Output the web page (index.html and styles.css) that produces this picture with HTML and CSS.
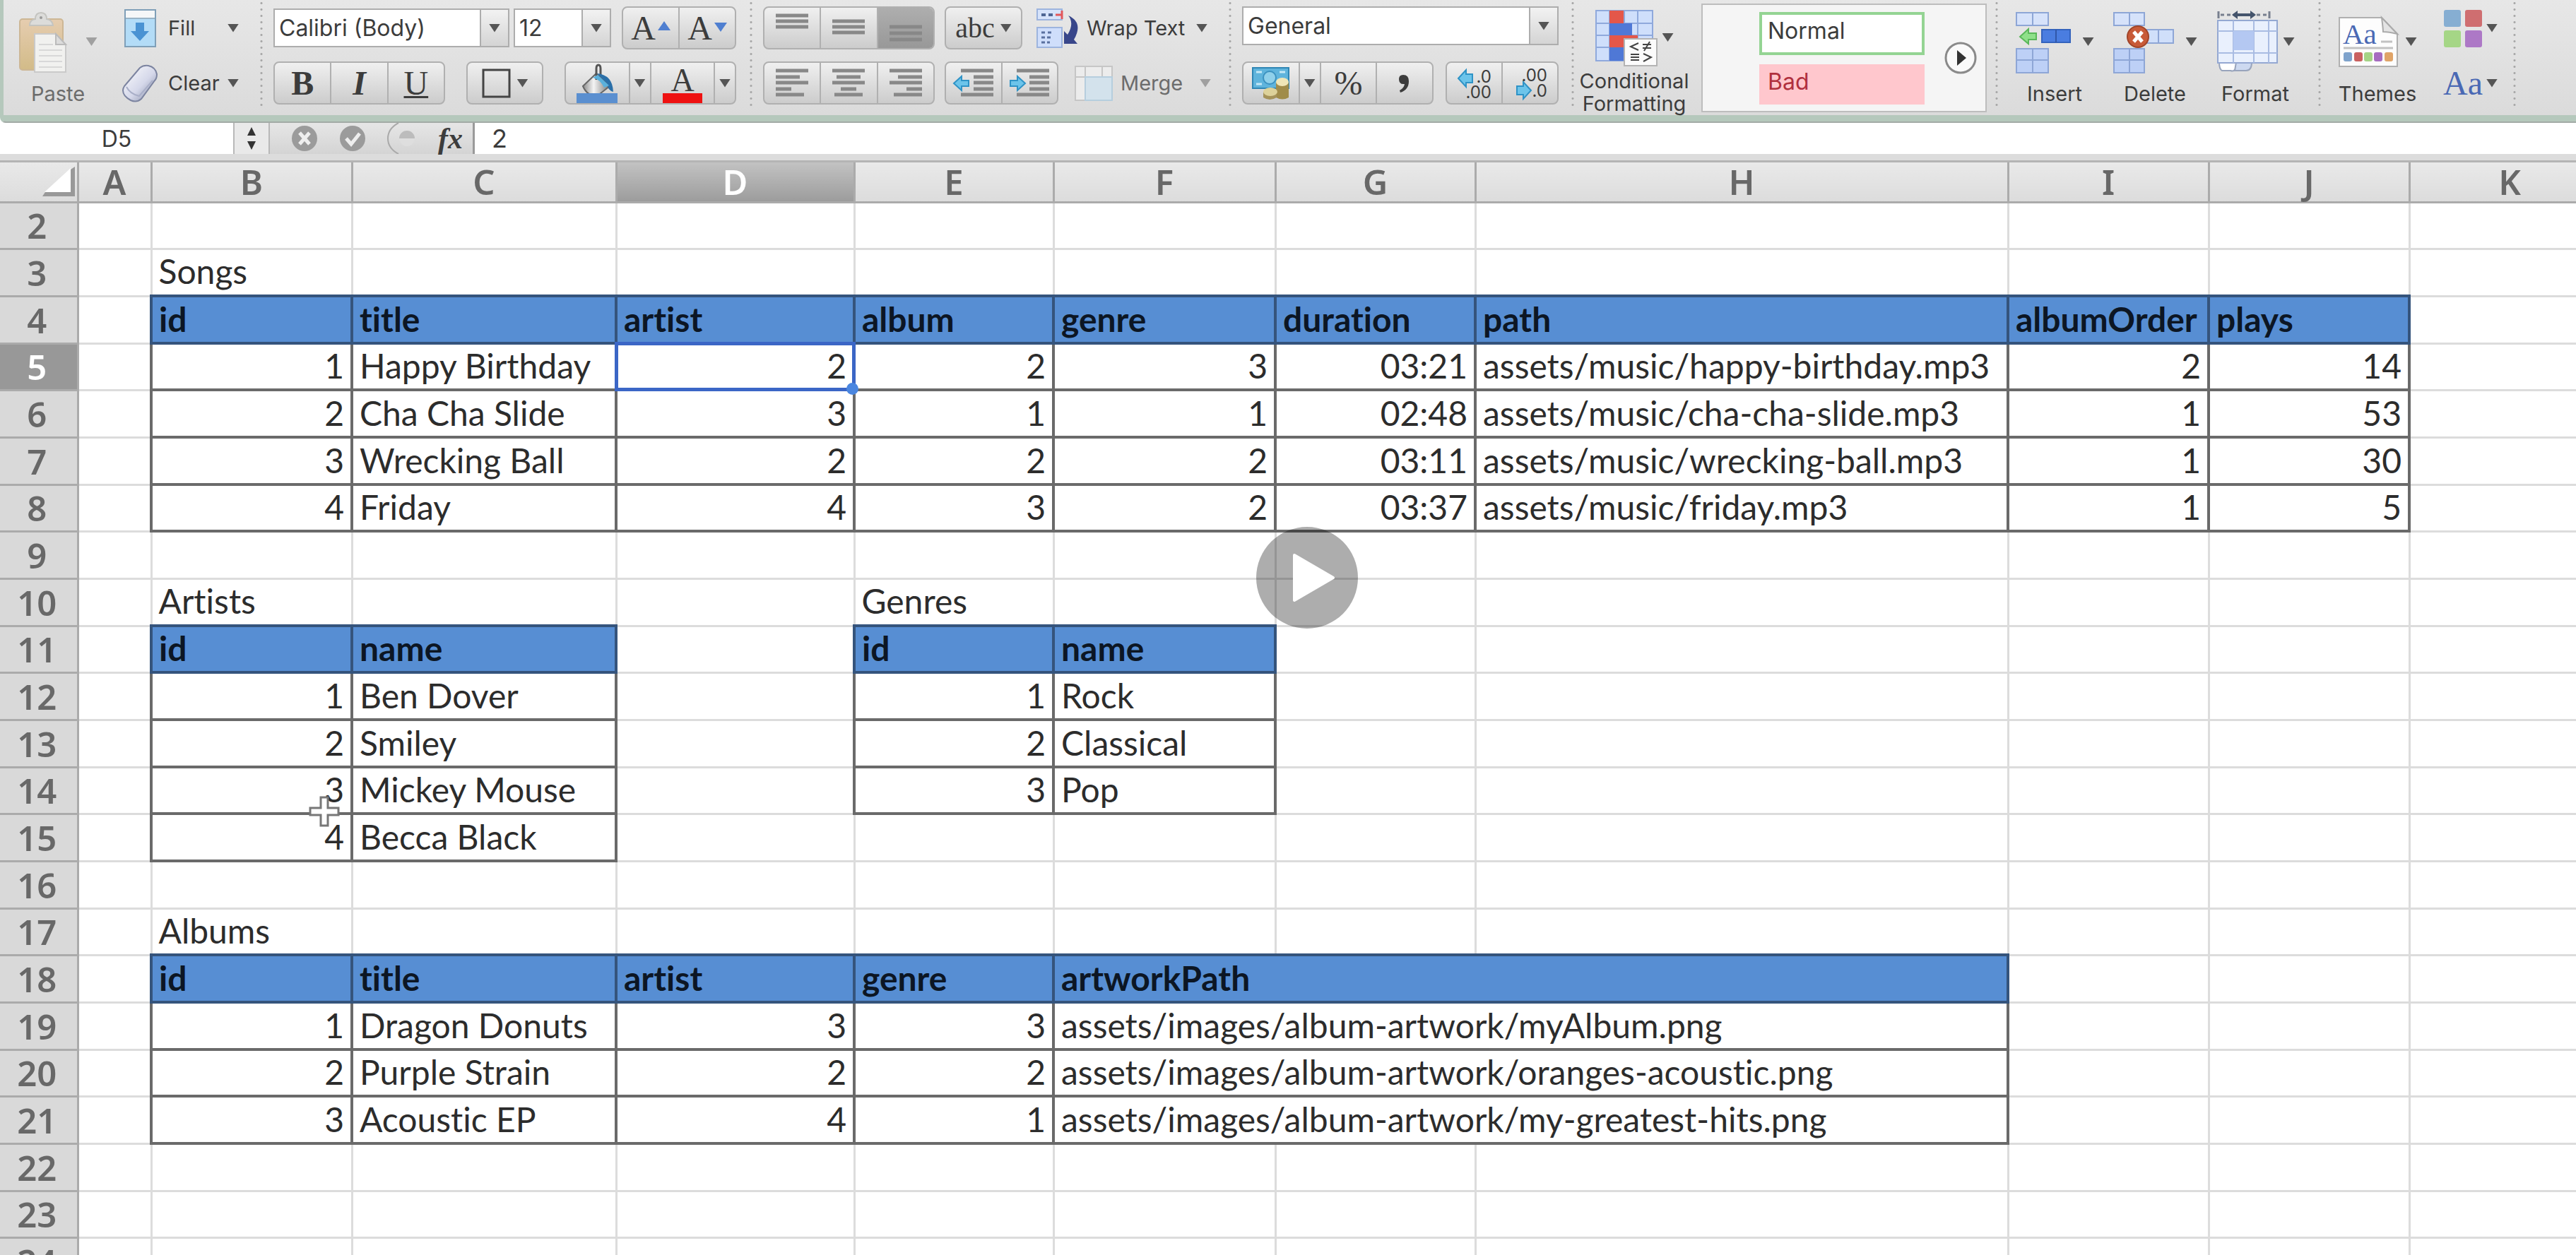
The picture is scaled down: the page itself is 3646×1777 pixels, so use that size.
FILE: index.html
```html
<!DOCTYPE html>
<html lang="en">
<head>
<meta charset="utf-8">
<title>Music database workbook</title>
<link rel="stylesheet" href="styles.css">
</head>
<body>
<header class="ribbon">
  <div class="group group-edit">
    <button class="big muted" type="button">
      <span class="big-icon">
        <svg width="88" height="90" viewBox="0 0 88 90" aria-hidden="true">
          <defs><linearGradient id="board" x1="0" y1="0" x2="0" y2="1"><stop offset="0" stop-color="#e6cdb0"/><stop offset="1" stop-color="#d2bb88"/></linearGradient></defs>
          <rect x="1" y="13" width="61" height="72" rx="4" fill="url(#board)" stroke="#cdb795" stroke-width="2"/>
          <path d="M15 22q0-8 8-9q0-9 8-9t8 9q8 1 9 9z" fill="#dcdcda" stroke="#c4c4c0" stroke-width="2"/>
          <circle cx="31" cy="11" r="2" fill="#999"/>
          <path d="M22 34h30l14 15v39H22z" fill="#f1f1ef" stroke="#cacaca" stroke-width="2"/>
          <path d="M52 34v15h14z" fill="#dcdcdc" stroke="#bbb" stroke-width="2"/>
          <path d="M28 49h20M28 57h33M28 65h33M28 73h33M28 81h33" stroke="#d8d8d8" stroke-width="2"/>
        </svg>
        <span class="caret"></span>
      </span>
      <span class="big-label">Paste</span>
    </button>
    <div class="rows">
      <button class="tool tool-edit" type="button">
        <svg width="52" height="56" viewBox="0 0 52 56" aria-hidden="true">
          <rect x="5" y="2" width="43" height="52" fill="#b3dcf7" stroke="#7f9fb8" stroke-width="2"/>
          <rect x="6" y="3" width="41" height="11" fill="#f5f7f8"/>
          <path d="M6 14h41" stroke="#9ab4c6" stroke-width="2"/>
          <path d="M20 20h12v12h7L26 46 13 32h7z" fill="#4a93d3"/>
        </svg>
        <span>Fill</span><span class="caret"></span>
      </button>
      <button class="tool tool-edit" type="button">
        <svg width="52" height="56" viewBox="0 0 52 56" aria-hidden="true">
          <defs><linearGradient id="rub" x1="0" y1="0" x2="1" y2="1"><stop offset="0" stop-color="#fff"/><stop offset=".55" stop-color="#d5d8ea"/><stop offset="1" stop-color="#7a829e"/></linearGradient></defs>
          <path d="M4 32 26 6q5-4 12-3 10 2 12 12 0 6-3 9L28 50q-7 6-15 2Q2 46 2 38q0-3 2-6z" fill="url(#rub)" stroke="#7c84a0" stroke-width="2"/>
          <path d="M7 33q5 10 18 13L44 24" fill="none" stroke="#a9afc8" stroke-width="2"/>
        </svg>
        <span>Clear</span><span class="caret"></span>
      </button>
    </div>
  </div>
  <div class="separator"></div>
  <div class="group group-font">
    <div class="rows">
      <div class="row">
        <div class="combo combo-font"><select aria-label="Font"><option>Calibri (Body)</option></select><span class="combo-arrow"><span class="caret"></span></span></div>
        <div class="combo combo-size"><select aria-label="Font size"><option>12</option></select><span class="combo-arrow"><span class="caret"></span></span></div>
        <div class="seg seg-grow">
          <button type="button" aria-label="Increase font size"><span class="serif">A</span><svg width="18" height="60" viewBox="0 0 18 60" aria-hidden="true"><path d="M0 33 9 20l9 13z" fill="#4f7fd0"/></svg></button>
          <button type="button" aria-label="Decrease font size"><span class="serif">A</span><svg width="18" height="60" viewBox="0 0 18 60" aria-hidden="true"><path d="M0 22h18L9 35z" fill="#4f7fd0"/></svg></button>
        </div>
      </div>
      <div class="row">
        <div class="seg seg-triple">
          <button type="button" class="serif bold">B</button>
          <button type="button" class="serif bold italic">I</button>
          <button type="button" class="serif underline">U</button>
        </div>
        <div class="seg seg-border"><button type="button" aria-label="Borders"><svg width="42" height="44" viewBox="0 0 42 44" aria-hidden="true"><rect x="2" y="3" width="37" height="38" fill="none" stroke="#444" stroke-width="3"/></svg><span class="caret"></span></button></div>
        <div class="seg seg-colour">
          <button type="button" aria-label="Fill colour">
            <svg width="60" height="58" viewBox="0 0 60 58" aria-hidden="true">
              <defs><linearGradient id="can" x1="0" y1="0" x2="1" y2="0"><stop offset="0" stop-color="#8a8a8a"/><stop offset=".4" stop-color="#f4f4f4"/><stop offset="1" stop-color="#777"/></linearGradient></defs>
              <path d="M29 15 48 33 30 47q-14 0-20-14z" fill="url(#can)" stroke="#666" stroke-width="2"/>
              <path d="M29 24V8q0-5 3-5t3 5v12" fill="none" stroke="#555" stroke-width="3"/>
              <path d="M30 15q22 2 23 26-8-2-9-12z" fill="#2a6fa8"/>
              <path d="M24 21q10 2 16 14l7-3L31 17z" fill="#5ab0dc"/>
              <rect x="1" y="43" width="58" height="15" fill="#5a8fd0"/>
            </svg>
          </button>
          <button type="button" class="drop" aria-label="Fill colour options"><span class="caret"></span></button>
          <button type="button" aria-label="Font colour"><svg width="56" height="58" viewBox="0 0 56 58" aria-hidden="true"><text x="28" y="40" text-anchor="middle" font-family="Liberation Serif, serif" font-size="46" fill="#3c3c3c">A</text><rect x="0" y="43" width="56" height="14" fill="#ee1111"/></svg></button>
          <button type="button" class="drop" aria-label="Font colour options"><span class="caret"></span></button>
        </div>
      </div>
    </div>
  </div>
  <div class="separator"></div>
  <div class="group group-align">
    <div class="rows">
      <div class="row">
        <div class="seg seg-triple">
          <button type="button" aria-label="Align top"><svg class="lines" width="46" height="44" viewBox="0 0 46 44"><path d="M0 4h46M0 12h46M0 20h46"/></svg></button>
          <button type="button" aria-label="Align middle"><svg class="lines" width="46" height="44" viewBox="0 0 46 44"><path d="M0 12h46M0 20h46M0 28h46"/></svg></button>
          <button type="button" class="pressed" aria-label="Align bottom"><svg class="lines" width="46" height="44" viewBox="0 0 46 44"><path d="M0 20h46M0 29h46M0 38h46"/></svg></button>
        </div>
        <div class="seg seg-abc"><button type="button" aria-label="Orientation"><span class="serif abc">abc</span><span class="caret"></span></button></div>
        <button class="tool tool-wrap" type="button">
          <svg width="60" height="58" viewBox="0 0 60 58" aria-hidden="true">
            <rect x="2" y="2" width="35" height="15" fill="#d6e3fb" stroke="#9db4de" stroke-width="2"/>
            <path d="M8 10h6m4 0h6" stroke="#4f6694" stroke-width="4"/><path d="M28 10h9m0-6v12" stroke="#e2575b" stroke-width="3"/>
            <rect x="2" y="28" width="35" height="28" fill="#cfdefb" stroke="#9db4de" stroke-width="2"/>
            <path d="M8 35h5m4 0h5M8 42h16M8 49h12" stroke="#5a70a0" stroke-width="3" stroke-dasharray="5 3"/>
            <path d="M46 11q22 10 8 34l5 6H40V33l5 5q10-16 1-27z" fill="#38468a"/>
          </svg>
          <span>Wrap Text</span><span class="caret"></span>
        </button>
      </div>
      <div class="row">
        <div class="seg seg-triple">
          <button type="button" aria-label="Align left"><svg class="lines" width="46" height="44" viewBox="0 0 46 44"><path d="M0 4h46M0 13h34M0 21h46M0 30h22M0 38h40"/></svg></button>
          <button type="button" aria-label="Align centre"><svg class="lines" width="46" height="44" viewBox="0 0 46 44"><path d="M0 4h46M6 13h34M0 21h46M12 30h22M3 38h40"/></svg></button>
          <button type="button" aria-label="Align right"><svg class="lines" width="46" height="44" viewBox="0 0 46 44"><path d="M0 4h46M12 13h34M0 21h46M24 30h22M6 38h40"/></svg></button>
        </div>
        <div class="seg seg-pair">
          <button type="button" aria-label="Decrease indent"><svg class="lines" width="60" height="44" viewBox="0 0 60 44"><path d="M12 4h46M30 13h28M30 21h28M30 30h28M12 38h46"/><path class="arrow" d="M2 22 13 12v6h10v8H13v6z"/></svg></button>
          <button type="button" aria-label="Increase indent"><svg class="lines" width="60" height="44" viewBox="0 0 60 44"><path d="M12 4h46M30 13h28M30 21h28M30 30h28M12 38h46"/><path class="arrow" d="M24 22 13 12v6H3v8h10v6z"/></svg></button>
        </div>
        <button class="tool tool-merge muted" type="button">
          <svg width="56" height="52" viewBox="0 0 56 52" aria-hidden="true">
            <rect x="2" y="2" width="52" height="48" fill="#ececec" stroke="#c6c6c6" stroke-width="2"/>
            <path d="M16 2v48M2 17h52M40 2v15" stroke="#c6c6c6" stroke-width="2"/>
            <rect x="16" y="17" width="38" height="33" fill="#d3e2ec" stroke="#b6cede" stroke-width="2"/>
          </svg>
          <span>Merge</span><span class="caret"></span>
        </button>
      </div>
    </div>
  </div>
  <div class="separator"></div>
  <div class="group group-number">
    <div class="rows">
      <div class="row">
        <div class="combo combo-number"><select aria-label="Number format"><option>General</option></select><span class="combo-arrow"><span class="caret"></span></span></div>
      </div>
      <div class="row">
        <div class="seg seg-number">
          <button type="button" aria-label="Currency">
            <svg width="56" height="52" viewBox="0 0 56 52" aria-hidden="true">
              <rect x="2" y="4" width="51" height="29" fill="#5fb4dc" stroke="#2f86b4" stroke-width="2"/>
              <path d="M7 10h8M7 27h8M40 10h8" stroke="#c4e8f6" stroke-width="3"/><circle cx="26" cy="18" r="9" fill="#8fd0ea" stroke="#3c92c0" stroke-width="2"/>
              <path d="M35 24v22q9 5 18 0V24z" fill="#a08c4a"/><ellipse cx="44" cy="24" rx="9" ry="6" fill="#efe6b8"/>
              <path d="M17 38v8q9 6 19 0v-8z" fill="#a5935a"/><ellipse cx="27" cy="38" rx="10" ry="6" fill="#ddd29a"/>
            </svg>
          </button>
          <button type="button" class="drop" aria-label="Currency options"><span class="caret"></span></button>
          <button type="button" class="serif">%</button>
          <button type="button" aria-label="Comma style"><svg width="22" height="34" viewBox="0 0 22 34" aria-hidden="true"><path d="M3 11Q3 5 9 5q8 0 8 9 0 12-12 16l-1-3q6-3 7-9-8 1-8-7z" fill="#3c3c3c"/></svg></button>
        </div>
        <div class="seg seg-decimal">
          <button type="button" aria-label="Increase decimal"><svg width="60" height="56" viewBox="0 0 60 56"><path class="arrow" d="M7 21 18 9v6h9v12h-9v6z"/><text x="54" y="27" text-anchor="end" class="digits">.0</text><text x="54" y="49" text-anchor="end" class="digits">.00</text></svg></button>
          <button type="button" aria-label="Decrease decimal"><svg width="60" height="56" viewBox="0 0 60 56"><path class="arrow" d="M31 38 20 26v6h-9v12h9v6z"/><text x="54" y="25" text-anchor="end" class="digits">.00</text><text x="54" y="47" text-anchor="end" class="digits">.0</text></svg></button>
        </div>
      </div>
    </div>
  </div>
  <div class="separator"></div>
  <div class="group group-style">
    <button class="big big-two" type="button">
      <span class="big-icon">
        <svg width="88" height="82" viewBox="0 0 88 82" aria-hidden="true">
          <rect x="1" y="3" width="80" height="71" fill="#cfdffb" stroke="#8fa9dc" stroke-width="2"/>
          <path d="M1 21h80M1 38h80M1 55h80M20 3v71M41 3v71M60 3v71" stroke="#8fa9dc" stroke-width="2"/>
          <rect x="20" y="3" width="20" height="18" fill="#e4574a"/><rect x="20" y="21" width="32" height="17" fill="#4f78d6"/>
          <rect x="20" y="38" width="40" height="17" fill="#e4574a"/><rect x="20" y="55" width="24" height="19" fill="#4f78d6"/>
          <rect x="41" y="43" width="46" height="38" fill="#fbfbfb" stroke="#b4b4b4" stroke-width="2"/>
          <path d="M61 49 50 54l11 5M67 51h12M67 56h12M77 47l-8 13M50 65h12M50 69h12M50 73h12M68 64l11 5-11 6" fill="none" stroke="#444" stroke-width="2"/>
        </svg>
        <span class="caret"></span>
      </span>
      <span class="big-label">Conditional<br>Formatting</span>
    </button>
    <div class="gallery">
      <div class="styles">
        <button type="button" class="style-normal">Normal</button>
        <button type="button" class="style-bad">Bad</button>
      </div>
      <button type="button" class="more" aria-label="More styles"><svg width="46" height="48" viewBox="0 0 46 48"><circle cx="23" cy="24" r="21" fill="#fafafa" stroke="#8a8a8a" stroke-width="3"/><path d="M18 13v22l13-11z" fill="#333"/></svg></button>
    </div>
  </div>
  <div class="separator"></div>
  <div class="group group-cells">
    <button class="big" type="button">
      <span class="big-icon">
        <svg width="88" height="90" viewBox="0 0 88 90" aria-hidden="true">
          <g stroke="#8ea6d6" stroke-width="2"><path d="M1 4h45v18H1z" fill="#d6e2fa"/><path d="M24 4v18"/><path d="M1 55h45v34H1z" fill="#bdd0f6"/><path d="M24 55v34M1 71h45"/></g>
          <rect x="37" y="28" width="40" height="18" fill="#4a7de0" stroke="#3463bd" stroke-width="2"/><path d="M57 28v18" stroke="#3157a8" stroke-width="2"/>
          <path d="M6 38 18 27v6h11v9H18v6z" fill="#8fe08a" stroke="#5ab85a" stroke-width="2"/>
        </svg>
        <span class="caret"></span>
      </span>
      <span class="big-label">Insert</span>
    </button>
    <button class="big" type="button">
      <span class="big-icon">
        <svg width="96" height="90" viewBox="0 0 96 90" aria-hidden="true">
          <g stroke="#8ea6d6" stroke-width="2"><path d="M1 4h43v18H1z" fill="#d6e2fa"/><path d="M23 4v18"/><path d="M1 55h43v34H1z" fill="#bdd0f6"/><path d="M23 55v34M1 71h43"/><path d="M45 28h40v19H45z" fill="#d0dffa"/><path d="M64 28v19"/></g>
          <circle cx="35" cy="38" r="15" fill="#c85a38" stroke="#a04428" stroke-width="2"/><path d="m29 31 12 14m0-14L29 45" stroke="#fff" stroke-width="5"/>
        </svg>
        <span class="caret"></span>
      </span>
      <span class="big-label">Delete</span>
    </button>
    <button class="big" type="button">
      <span class="big-icon">
        <svg width="88" height="90" viewBox="0 0 88 90" aria-hidden="true">
          <path d="M3 2v10M75 2v10M6 7h5m4 0h5M57 7h5m4 0h5" stroke="#777f8e" stroke-width="3"/><path d="M24 7h30" stroke="#44546c" stroke-width="4"/><path d="M22 7l8-6v12zM56 7l-8-6v12z" fill="#44546c"/>
          <path d="M4 74h24v8q-3 6-8 4H8q-4-2-4-12z" fill="#fff" stroke="#98a4bc" stroke-width="2"/><path d="M28 74h22q0 12-8 12H26z" fill="#cdd9f0" stroke="#98a4bc" stroke-width="2"/>
          <rect x="2" y="15" width="84" height="60" fill="#e9f0fd" stroke="#94a8d2" stroke-width="2"/>
          <path d="M24 15v60M53 15v60M74 15v60M2 30h84M2 61h84" stroke="#a9bce2" stroke-width="2"/>
          <rect x="24" y="30" width="29" height="27" fill="#b4c8f2"/>
        </svg>
        <span class="caret"></span>
      </span>
      <span class="big-label">Format</span>
    </button>
  </div>
  <div class="separator"></div>
  <div class="group group-themes">
    <button class="big" type="button">
      <span class="big-icon">
        <svg width="88" height="90" viewBox="0 0 88 90" aria-hidden="true">
          <path d="M1 11h60l22 23v46H1z" fill="#fdfdfd" stroke="#b0b0b0" stroke-width="2"/><path d="M61 11q2 16 2 20 8 0 20 3z" fill="#e4e4e4" stroke="#aaa" stroke-width="2"/>
          <text x="6" y="48" font-family="Liberation Serif, serif" font-size="41" fill="#4a69b4">Aa</text>
          <path d="M60 45h16M7 54h70" stroke="#c2c2c2" stroke-width="3"/>
          <rect x="7" y="60" width="12" height="13" rx="3" fill="#7fa3cc"/><rect x="22" y="60" width="12" height="13" rx="3" fill="#c9605f"/><rect x="36" y="60" width="12" height="13" rx="3" fill="#a5d386"/><rect x="50" y="60" width="12" height="13" rx="3" fill="#a66cc0"/><rect x="65" y="60" width="12" height="13" rx="3" fill="#e0a468"/>
        </svg>
        <span class="caret"></span>
      </span>
      <span class="big-label">Themes</span>
    </button>
    <div class="rows">
      <button class="tool tool-theme" type="button" aria-label="Theme colours">
        <svg width="56" height="56" viewBox="0 0 56 56" aria-hidden="true"><rect x="1" y="2" width="24" height="24" rx="3" fill="#86aed2"/><rect x="31" y="2" width="24" height="24" rx="3" fill="#cf6e70"/><rect x="1" y="31" width="24" height="24" rx="3" fill="#a5d686"/><rect x="31" y="31" width="24" height="24" rx="3" fill="#ad78c6"/></svg>
        <span class="caret"></span>
      </button>
      <button class="tool tool-theme" type="button" aria-label="Theme fonts"><span class="serif theme-font">Aa</span><span class="caret"></span></button>
    </div>
  </div>
  <div class="separator"></div>
</header>

<div class="formula-bar">
  <input class="name-box" aria-label="Name box" value="D5">
  <button class="stepper" type="button" aria-label="Named ranges"><svg width="14" height="32" viewBox="0 0 14 32"><path d="M1 12 7 0l6 12zM1 20l6 12 6-12z" fill="#333"/></svg></button>
  <div class="formula-tools">
    <button type="button" aria-label="Cancel"><svg width="38" height="38" viewBox="0 0 38 38"><circle cx="19" cy="19" r="18" fill="#9b9b9b"/><path d="m12 11 14 16m0-16L12 27" stroke="#eee" stroke-width="5"/></svg></button>
    <button type="button" aria-label="Enter"><svg width="38" height="38" viewBox="0 0 38 38"><circle cx="19" cy="19" r="18" fill="#9b9b9b"/><path d="m10 19 7 8 12-15" fill="none" stroke="#eee" stroke-width="5"/></svg></button>
    <svg width="42" height="44" viewBox="0 0 42 44" aria-hidden="true"><path d="M16 0Q1 8 1 22t15 22" fill="none" stroke="#aaa" stroke-width="2"/><circle cx="28" cy="22" r="11" fill="#dedede"/><path d="M17 22a11 11 0 0 1 22 0z" fill="#bcbcbc"/></svg>
    <button type="button" class="fx" aria-label="Insert function">fx</button>
  </div>
  <input class="formula" aria-label="Formula" value="2">
</div>

<main class="sheet">
<table class="grid">
<colgroup><col class="c-num"><col class="c-a"><col class="c-b"><col class="c-c"><col class="c-d"><col class="c-e"><col class="c-f"><col class="c-g"><col class="c-h"><col class="c-i"><col class="c-j"><col class="c-k"></colgroup>
<thead>
<tr><th class="corner"><svg width="46" height="42" viewBox="0 0 46 42" aria-hidden="true"><path d="M0 42h46V0l-6 4v32H4z" fill="#999"/><path d="M40 2v34H3z" fill="#fff"/></svg></th><th>A</th><th>B</th><th>C</th><th class="current">D</th><th>E</th><th>F</th><th>G</th><th>H</th><th>I</th><th>J</th><th>K</th></tr>
</thead>
<tbody>
<tr><th>2</th><td></td><td></td><td></td><td></td><td></td><td></td><td></td><td></td><td></td><td></td><td></td></tr>
<tr><th>3</th><td></td><td>Songs</td><td></td><td></td><td></td><td></td><td></td><td></td><td></td><td></td><td></td></tr>
<tr><th>4</th><td></td><td class="head">id</td><td class="head">title</td><td class="head">artist</td><td class="head">album</td><td class="head">genre</td><td class="head">duration</td><td class="head">path</td><td class="head">albumOrder</td><td class="head">plays</td><td></td></tr>
<tr><th class="current">5</th><td></td><td class="box num">1</td><td class="box">Happy Birthday</td><td class="box num selected">2<span class="handle"></span></td><td class="box num">2</td><td class="box num">3</td><td class="box num">03:21</td><td class="box">assets/music/happy-birthday.mp3</td><td class="box num">2</td><td class="box num">14</td><td></td></tr>
<tr><th>6</th><td></td><td class="box num">2</td><td class="box">Cha Cha Slide</td><td class="box num">3</td><td class="box num">1</td><td class="box num">1</td><td class="box num">02:48</td><td class="box">assets/music/cha-cha-slide.mp3</td><td class="box num">1</td><td class="box num">53</td><td></td></tr>
<tr><th>7</th><td></td><td class="box num">3</td><td class="box">Wrecking Ball</td><td class="box num">2</td><td class="box num">2</td><td class="box num">2</td><td class="box num">03:11</td><td class="box">assets/music/wrecking-ball.mp3</td><td class="box num">1</td><td class="box num">30</td><td></td></tr>
<tr><th>8</th><td></td><td class="box num">4</td><td class="box">Friday</td><td class="box num">4</td><td class="box num">3</td><td class="box num">2</td><td class="box num">03:37</td><td class="box">assets/music/friday.mp3</td><td class="box num">1</td><td class="box num">5</td><td></td></tr>
<tr><th>9</th><td></td><td></td><td></td><td></td><td></td><td></td><td></td><td></td><td></td><td></td><td></td></tr>
<tr><th>10</th><td></td><td>Artists</td><td></td><td></td><td>Genres</td><td></td><td></td><td></td><td></td><td></td><td></td></tr>
<tr><th>11</th><td></td><td class="head">id</td><td class="head">name</td><td></td><td class="head">id</td><td class="head">name</td><td></td><td></td><td></td><td></td><td></td></tr>
<tr><th>12</th><td></td><td class="box num">1</td><td class="box">Ben Dover</td><td></td><td class="box num">1</td><td class="box">Rock</td><td></td><td></td><td></td><td></td><td></td></tr>
<tr><th>13</th><td></td><td class="box num">2</td><td class="box">Smiley</td><td></td><td class="box num">2</td><td class="box">Classical</td><td></td><td></td><td></td><td></td><td></td></tr>
<tr><th>14</th><td></td><td class="box num">3</td><td class="box">Mickey Mouse</td><td></td><td class="box num">3</td><td class="box">Pop</td><td></td><td></td><td></td><td></td><td></td></tr>
<tr><th>15</th><td></td><td class="box num">4</td><td class="box">Becca Black</td><td></td><td></td><td></td><td></td><td></td><td></td><td></td><td></td></tr>
<tr><th>16</th><td></td><td></td><td></td><td></td><td></td><td></td><td></td><td></td><td></td><td></td><td></td></tr>
<tr><th>17</th><td></td><td>Albums</td><td></td><td></td><td></td><td></td><td></td><td></td><td></td><td></td><td></td></tr>
<tr><th>18</th><td></td><td class="head">id</td><td class="head">title</td><td class="head">artist</td><td class="head">genre</td><td class="head" colspan="3">artworkPath</td><td></td><td></td><td></td></tr>
<tr><th>19</th><td></td><td class="box num">1</td><td class="box">Dragon Donuts</td><td class="box num">3</td><td class="box num">3</td><td class="box" colspan="3">assets/images/album-artwork/myAlbum.png</td><td></td><td></td><td></td></tr>
<tr><th>20</th><td></td><td class="box num">2</td><td class="box">Purple Strain</td><td class="box num">2</td><td class="box num">2</td><td class="box" colspan="3">assets/images/album-artwork/oranges-acoustic.png</td><td></td><td></td><td></td></tr>
<tr><th>21</th><td></td><td class="box num">3</td><td class="box">Acoustic EP</td><td class="box num">4</td><td class="box num">1</td><td class="box" colspan="3">assets/images/album-artwork/my-greatest-hits.png</td><td></td><td></td><td></td></tr>
<tr><th>22</th><td></td><td></td><td></td><td></td><td></td><td></td><td></td><td></td><td></td><td></td><td></td></tr>
<tr><th>23</th><td></td><td></td><td></td><td></td><td></td><td></td><td></td><td></td><td></td><td></td><td></td></tr>
<tr><th>24</th><td></td><td></td><td></td><td></td><td></td><td></td><td></td><td></td><td></td><td></td><td></td></tr>
</tbody>
</table>
<svg class="pointer" width="44" height="48" viewBox="0 0 44 48" aria-hidden="true"><path d="M17 3h10v15h15v10H27v15H17V28H2V18h15z" fill="#fff" stroke="#777" stroke-width="3"/></svg>
</main>
<button class="play" type="button" aria-label="Play video"><svg width="144" height="144" viewBox="0 0 144 144"><path d="M54 40 109 72 54 104z" fill="#fff" stroke="#fff" stroke-width="4" stroke-linejoin="round"/></svg></button>
</body>
</html>
```
FILE: styles.css
```css
* { box-sizing: border-box; }

body {
  margin: 0;
  height: 100vh;
  display: flex;
  flex-direction: column;
  overflow: hidden;
  position: relative;
  background: #fff;
  font-family: Inter, "Liberation Sans", sans-serif;
  font-size: 29px;
  color: #3c3c3c;
}

button, input, select {
  font: inherit;
  color: inherit;
  margin: 0;
  padding: 0;
  border: 0;
  background: none;
}

svg { display: block; flex: none; }

/* Ribbon */
.ribbon {
  flex: none;
  display: flex;
  height: 174px;
  border-left: 5px solid #b5c8bc;
  border-bottom: 2px solid #a3aba6;
  background: linear-gradient(#e7e7e7, #dbdbdb 163px, #b5c8bc 163px);
  border-bottom-left-radius: 8px;
  overflow: hidden;
}

.group { flex: none; display: flex; height: 163px; }
.group-edit { padding: 0 30px 0 6px; gap: 19px; }
.group-font { padding: 0 19px 0 15px; }
.group-align { padding: 0 25px 0 15px; }
.group-number { padding: 0 18px 0 15px; }
.group-style { padding: 0 12px 0 5px; gap: 15px; }
.group-cells { padding: 0 18px 0 9px; }
.group-themes { padding: 0 22px 0 9px; gap: 22px; }

.separator {
  flex: none;
  width: 4px;
  height: 154px;
  background: radial-gradient(circle, #a6a6a6 1px, transparent 2px) 0 0 / 4px 9px;
}

.rows { display: flex; flex-direction: column; gap: 17px; padding-top: 9px; }
.row { display: flex; align-items: center; height: 61px; }

.caret {
  flex: none;
  width: 16px;
  height: 12px;
  background: #555;
  clip-path: polygon(0 0, 100% 0, 50% 100%);
}

.muted { color: #6c6c6c; }
.muted .caret { background: #a0a0a0; }

.big {
  display: flex;
  flex-direction: column;
  align-items: center;
  width: 142px;
  padding-top: 14px;
  gap: 13px;
}
.big-icon { display: flex; align-items: center; gap: 7px; height: 90px; }
.big-label { line-height: 32px; white-space: nowrap; }
.big-two { width: 160px; padding-top: 12px; gap: 5px; }
.big-two .big-icon { height: 82px; }

.tool {
  display: grid;
  align-items: center;
  justify-items: start;
  height: 61px;
  text-align: left;
  white-space: nowrap;
}
.tool-edit { grid-template-columns: 66px 84px 16px; }
.tool-wrap { grid-template-columns: 72px 155px 16px; margin-left: 19px; }
.tool-merge { grid-template-columns: 66px 112px 16px; margin-left: 22px; }
.tool-theme { grid-template-columns: 61px 16px; }

.serif { font-family: "Liberation Serif", serif; font-size: 48px; line-height: 56px; }
.bold { font-weight: 700; }
.italic { font-style: italic; }
.underline { text-decoration: underline; text-decoration-thickness: 3px; }
.serif.abc { font-size: 40px; }
.serif.theme-font { color: #4a69b4; }

.combo {
  position: relative;
  height: 55px;
  border: 2px solid #adadad;
  background: #fff;
}
.combo select {
  appearance: none;
  display: block;
  width: 100%;
  height: 100%;
  padding-left: 6px;
  font-size: 32px;
}
.combo-arrow {
  position: absolute;
  top: 0;
  right: 0;
  bottom: 0;
  width: 40px;
  display: flex;
  align-items: center;
  justify-content: center;
  border-left: 2px solid #adadad;
  background: linear-gradient(#f2f2f2, #d4d4d4);
  pointer-events: none;
}
.combo-font { width: 334px; margin-right: 6px; }
.combo-size { width: 138px; margin-right: 15px; }
.combo-number { width: 448px; align-self: flex-start; }

.seg {
  display: flex;
  height: 61px;
  border: 2px solid #b0b0b0;
  border-radius: 8px;
  background: linear-gradient(#f0f0f0, #cccccc);
  overflow: hidden;
}
.seg button {
  flex: 1;
  display: flex;
  align-items: center;
  justify-content: center;
  gap: 8px;
}
.seg button + button { border-left: 2px solid #b0b0b0; }
.seg .drop { flex: none; width: 30px; }
.seg .pressed { background: linear-gradient(#aeaeae, #989898); }
.seg-grow { width: 162px; }
.seg-grow button { gap: 3px; }
.seg-triple { width: 243px; }
.seg-border { width: 109px; margin: 0 30px; }
.seg-colour { width: 243px; }
.group-align .seg + .seg { margin-left: 14px; }
.seg-abc { width: 110px; }
.seg-pair { width: 161px; }
.seg-number { width: 271px; margin-right: 17px; }
.seg-decimal { width: 160px; }

.lines { fill: none; stroke: #888; stroke-width: 5px; }
.arrow { fill: #6cc4ea; stroke: #2f93c6; stroke-width: 2px; }
.digits { font-size: 24px; fill: #3c3c3c; }

.gallery {
  display: flex;
  align-items: center;
  width: 404px;
  height: 154px;
  margin-top: 5px;
  padding-left: 80px;
  border: 2px solid #bdbdbd;
  background: #f5f5f5;
}
.styles { display: flex; flex-direction: column; gap: 13px; width: 234px; }
.styles button { text-align: left; padding: 0 8px 8px; font-size: 32px; }
.style-normal { height: 61px; border: 4px solid #94d493; background: #fff; }
.styles .style-bad { height: 57px; padding-left: 12px; background: #ffc7cd; color: #b0303e; }
.more { margin-left: 28px; }

/* Formula bar */
.formula-bar {
  flex: none;
  display: flex;
  height: 56px;
  border-bottom: 3px solid #b4b4b4;
  background: #dcdcdc;
  padding-bottom: 9px;
}
.name-box { width: 330px; background: #fff; text-align: center; font-size: 32px; }
.stepper {
  display: flex;
  align-items: center;
  justify-content: center;
  width: 52px;
  border: solid #b8b8b8;
  border-width: 0 2px;
  background: #e9e9e9;
}
.formula-tools {
  display: flex;
  align-items: center;
  gap: 30px;
  width: 290px;
  padding-left: 30px;
  border-right: 3px solid #9a9a9a;
  background: linear-gradient(#e6e6e6, #d4d4d4);
}
.fx { font: italic 700 42px/40px "Liberation Serif", serif; }
.formula { flex: 1; padding-left: 24px; background: #fff; font-size: 36px; }

/* Sheet */
.sheet { flex: 1; min-height: 0; position: relative; overflow: hidden; }

.grid {
  table-layout: fixed;
  width: 100%;
  border-collapse: collapse;
  font-family: Lato, sans-serif;
  font-size: 48px;
  font-variant-ligatures: none;
  line-height: 56px;
  color: #2c2c2c;
}
.c-num { width: 110px; }
.c-a { width: 104px; }
.c-b, .c-i, .c-j, .c-k { width: 284px; }
.c-c { width: 374px; }
.c-d { width: 337px; }
.c-e { width: 282px; }
.c-f { width: 314px; }
.c-g { width: 283px; }
.c-h { width: 754px; }

.grid thead tr { height: 56px; }
.grid tbody tr { height: 67px; }
.grid tbody tr:nth-child(3n+1) { height: 66px; }

.grid th, .grid td { padding: 0; white-space: nowrap; }
.grid th {
  border: 3px solid #ababab;
  background: #d9d9d9;
  font-family: "Noto Sans", sans-serif;
  font-weight: 600;
  font-size: 49px;
  line-height: 52px;
  color: #686868;
}
.grid tbody th { padding-right: 4px; }
.grid thead th { background: linear-gradient(#e9e9e9, #dcdcdc); border-top: 0; }
.grid th:first-child { border-left: 0; }
.grid thead .current { background: linear-gradient(#c2c2c2, #9c9c9c); color: #fff; }
.grid tbody .current { background: #989898; color: #fff; }
.corner svg { margin-left: auto; margin-right: 3px; }

.grid td {
  border: 3px solid #dcdcdc;
  padding: 0 9px 2px;
  text-align: left;
}
.grid .box { border: 4px solid #6a6a6a; }
.grid .head { border: 4px solid #35547c; background: #578ed3; font-weight: 700; color: #0c1624; }
.grid .num { text-align: right; }

.selected { position: relative; }
.selected::after {
  content: "";
  position: absolute;
  inset: -4px;
  border: 5px solid #3b66c6;
}
.handle {
  position: absolute;
  right: -8px;
  bottom: -9px;
  z-index: 1;
  width: 17px;
  height: 17px;
  border-radius: 50%;
  background: #4a86e0;
}

.pointer { position: absolute; left: 437px; top: 896px; }

.play {
  position: absolute;
  left: 1778px;
  top: 746px;
  width: 144px;
  height: 144px;
  border-radius: 50%;
  background: rgba(0, 0, 0, 0.32);
}
```
